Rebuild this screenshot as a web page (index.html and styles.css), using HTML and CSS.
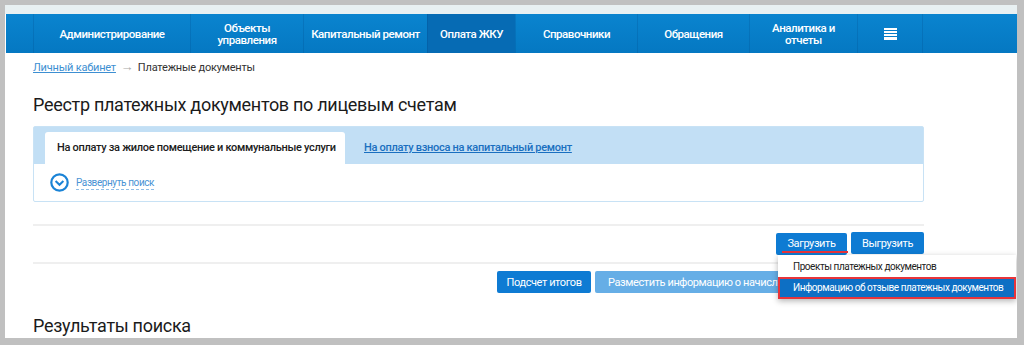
FILE: index.html
```html
<!DOCTYPE html>
<html lang="ru">
<head>
  <meta charset="UTF-8">
  <title>Реестр платежных документов</title>
  <link rel="stylesheet" href="styles.css">
</head>
<body>

<div class="page">
  <div class="topline"></div>

  <nav class="menu">
    <div class="menu-inner">
      <a class="menu-item">Администрирование</a>
      <a class="menu-item">Объекты<br>управления</a>
      <a class="menu-item">Капитальный ремонт</a>
      <a class="menu-item active">Оплата ЖКУ</a>
      <a class="menu-item">Справочники</a>
      <a class="menu-item">Обращения</a>
      <a class="menu-item">Аналитика и<br>отчеты</a>
      <a class="menu-item">
        <svg width="13" height="12" viewBox="0 0 13 12">
          <rect x="0" y="0" width="13" height="2" fill="#fff"/>
          <rect x="0" y="3" width="13" height="2" fill="#fff"/>
          <rect x="0" y="6" width="13" height="2" fill="#fff"/>
          <rect x="0" y="9" width="13" height="3" fill="#fff"/>
        </svg>
      </a>
    </div>
  </nav>

  <div class="content">
    <div class="breadcrumbs">
      <a href="#">Личный кабинет</a>
      <span class="arrow">→</span>
      <span>Платежные документы</span>
    </div>

    <h1>Реестр платежных документов по лицевым счетам</h1>

    <div class="panel">
      <div class="tabs">
        <div class="tab active">На оплату за жилое помещение и коммунальные услуги</div>
        <a class="tab" href="#">На оплату взноса на капитальный ремонт</a>
      </div>
      <div class="panel-body">
        <svg class="expand-icon" width="19" height="19" viewBox="0 0 19 19">
          <circle cx="9.5" cy="9.5" r="8.2" fill="none" stroke="#1a83d6" stroke-width="2.2"/>
          <path d="M5.6 8 L9.5 11.8 L13.4 8" fill="none" stroke="#1a83d6" stroke-width="2"/>
        </svg>
        <span class="expand-link">Развернуть поиск</span>
      </div>
    </div>

    <div class="actions">
      <div class="dropdown-wrap">
        <button class="btn upload">Загрузить</button>
        <div class="dropdown">
          <div class="dropdown-item">Проекты платежных документов</div>
          <div class="dropdown-item selected">Информацию об отзыве платежных документов</div>
        </div>
      </div>
      <button class="btn download">Выгрузить</button>
    </div>

    <div class="actions second">
      <button class="btn totals">Подсчет итогов</button>
      <button class="btn light">Разместить информацию о начислениях</button>
    </div>

    <h2>Результаты поиска</h2>
  </div>
</div>

</body>
</html>
```

FILE: styles.css
```css
html, body {
  margin: 0;
  height: 100%;
  overflow: hidden;
}
body {
  background-color: #c0c0c0;
  font-family: Roboto, "Liberation Sans", sans-serif;
  color: #222;
  padding: 5px 7px 7px 5px;
  box-sizing: border-box;
}
.page {
  background: #fff;
  height: 333px;
  overflow: hidden;
}
.topline {
  height: 9px;
  background: #e8f0f2;
}
.menu {
  margin-left: 1px;
  height: 39px;
  background: linear-gradient(#0a84cf, #0578c2);
}
.menu-inner {
  display: flex;
  margin-left: 27px;
  height: 100%;
}
.menu-item {
  display: flex;
  align-items: center;
  justify-content: center;
  text-align: center;
  color: #fff;
  font-weight: 500;
  font-size: 11.5px;
  line-height: 12px;
  letter-spacing: -0.45px;
  border-left: 1px solid rgba(0, 60, 120, 0.18);
  box-sizing: border-box;
}
.menu-item:nth-child(1) { width: 157px; }
.menu-item:nth-child(2) { width: 113px; }
.menu-item:nth-child(3) { width: 124px; }
.menu-item:nth-child(4) { width: 88px; }
.menu-item:nth-child(5) { width: 122px; }
.menu-item:nth-child(6) { width: 112px; }
.menu-item:nth-child(7) { width: 108px; }
.menu-item:nth-child(8) {
  width: 66px;
  border-right: 1px solid rgba(0, 60, 120, 0.18);
}
.menu-item.active {
  background: #066bb4;
}

.content {
  padding-left: 28px;
  width: 891px;
}
.breadcrumbs {
  margin-top: 8px;
  height: 14px;
  font-size: 11px;
  line-height: 14px;
  letter-spacing: -0.2px;
  color: #333;
}
.breadcrumbs a {
  color: #3d8fd2;
}
.breadcrumbs .arrow {
  color: #aaa;
  font-size: 13px;
  line-height: 10px;
  margin: 0 2px;
}
h1 {
  margin: 18px 0 0;
  font-size: 18px;
  font-weight: normal;
  line-height: 24px;
  letter-spacing: -0.3px;
  color: #1b1b1b;
}
.panel {
  margin-top: 9px;
  border: 1px solid #c8e2f5;
  border-radius: 2px;
}
.tabs {
  display: flex;
  align-items: flex-end;
  height: 37px;
  background: #c2dff5;
  padding-left: 11px;
}
.tab {
  font-size: 11px;
  font-weight: 500;
  letter-spacing: -0.3px;
  height: 32px;
  line-height: 32px;
  padding: 0 12px;
  white-space: nowrap;
}
.tab.active {
  background: #fff;
  color: #1c1c1c;
  border-radius: 3px 3px 0 0;
  width: 300px;
  box-sizing: border-box;
}
a.tab {
  color: #1a6fc0;
  text-decoration: underline;
  margin-left: 7px;
}
.panel-body {
  display: flex;
  align-items: center;
  height: 37px;
  padding-left: 16px;
}
.expand-icon {
  margin-right: 7px;
}
.expand-link {
  font-size: 10px;
  letter-spacing: -0.4px;
  color: #4a93d4;
  border-bottom: 1px dashed #8fbde6;
  line-height: 13px;
}

.actions {
  display: flex;
  justify-content: flex-end;
  gap: 4px;
  border-top: 2px solid #efefef;
  margin-top: 22px;
  padding-top: 6px;
  height: 30px;
}
.actions.second {
  margin-top: 0;
  padding-top: 7px;
  justify-content: flex-start;
  padding-left: 464px;
  height: 34px;
}
.btn {
  height: 22px;
  border: none;
  border-radius: 2px;
  background: #0e7bd3;
  color: #fff;
  font-family: Roboto, sans-serif;
  font-size: 11px;
  letter-spacing: -0.4px;
  padding: 0 13px;
  white-space: nowrap;
}
.btn.upload {
  width: 71px;
  padding: 0;
  position: relative;
}
.btn.download {
  width: 73px;
  padding: 0;
}
.btn.totals {
  width: 94px;
  padding: 0;
}
.btn.light {
  background: #66aee6;
}
.dropdown-wrap {
  position: relative;
}
.btn.upload::after {
  content: "";
  position: absolute;
  left: 6px;
  right: -1px;
  bottom: 2px;
  height: 2px;
  background: #e8343a;
}
.dropdown {
  position: absolute;
  left: 2px;
  top: 23px;
  width: 238px;
  background: #fff;
  box-shadow: 0 2px 6px rgba(0, 0, 0, 0.3);
  z-index: 5;
  padding-top: 1px;
}
.dropdown-item {
  font-size: 10px;
  letter-spacing: -0.45px;
  color: #222;
  height: 21px;
  line-height: 21px;
  padding-left: 15px;
  white-space: nowrap;
}
.dropdown-item.selected {
  background: #0d6fc4;
  color: #fff;
  outline: 2px solid #e8343a;
  outline-offset: -2px;
  height: 22px;
  line-height: 22px;
}
h2 {
  margin: 10px 0 0;
  font-size: 18px;
  font-weight: normal;
  line-height: 22px;
  letter-spacing: -0.3px;
  color: #1b1b1b;
}
```
